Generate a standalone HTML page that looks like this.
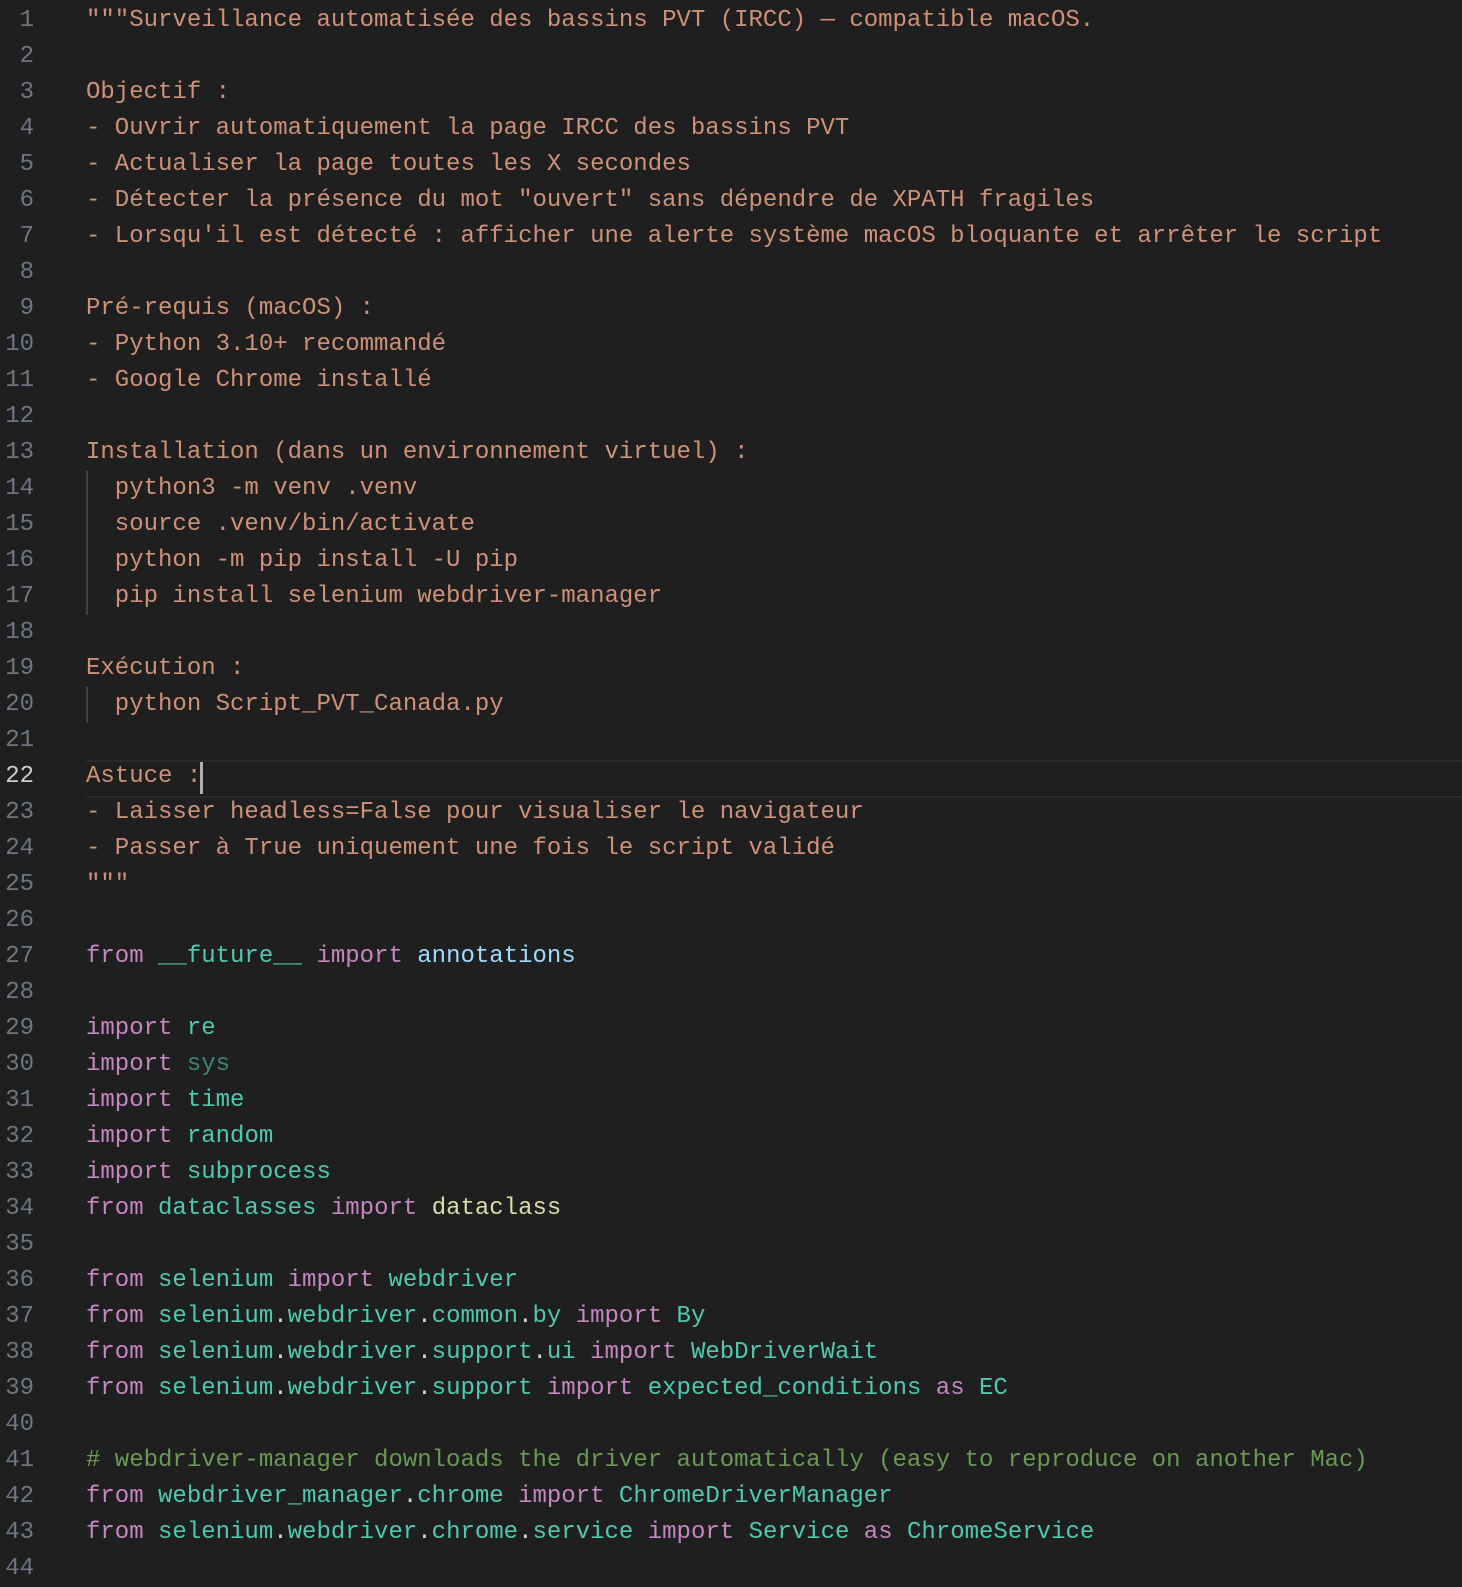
<!DOCTYPE html>
<html><head><meta charset="utf-8"><style>
body{margin:0;width:1462px;height:1568px;background:#1f1f1f;overflow:hidden;font-family:"Liberation Mono",monospace;font-size:24px}
.l{position:absolute;left:0;width:1462px;height:36px;line-height:36px;white-space:pre}
.n{position:absolute;right:1428px;color:#6e7681;text-align:right}
.c{position:absolute;left:86px;color:#ce9178}
.cur .n{color:#cccccc}
.k{color:#c586c0}.m{color:#4ec9b0}.v{color:#9cdcfe}.f{color:#dcdcaa}.g{color:#6a9955}.w{color:#d4d4d4}.d{color:#4ec9b0;opacity:.6}
.hl{position:absolute;left:86px;right:0;top:760px;height:34px;border-top:2px solid #2a2a2a;border-bottom:2px solid #2a2a2a}
.cursor{position:absolute;left:200px;top:762px;width:3px;height:32px;background:#aeafad}
.guide{position:absolute;left:86px;width:2px;background:#404040}
</style></head><body>
<div class="hl"></div>
<div class="guide" style="top:471px;height:144px"></div>
<div class="guide" style="top:687px;height:36px"></div>
<div class="l" style="top:3px"><span class="n">1</span><span class="c">"""Surveillance automatisée des bassins PVT (IRCC) — compatible macOS.</span></div>
<div class="l" style="top:39px"><span class="n">2</span></div>
<div class="l" style="top:75px"><span class="n">3</span><span class="c">Objectif :</span></div>
<div class="l" style="top:111px"><span class="n">4</span><span class="c">- Ouvrir automatiquement la page IRCC des bassins PVT</span></div>
<div class="l" style="top:147px"><span class="n">5</span><span class="c">- Actualiser la page toutes les X secondes</span></div>
<div class="l" style="top:183px"><span class="n">6</span><span class="c">- Détecter la présence du mot "ouvert" sans dépendre de XPATH fragiles</span></div>
<div class="l" style="top:219px"><span class="n">7</span><span class="c">- Lorsqu'il est détecté : afficher une alerte système macOS bloquante et arrêter le script</span></div>
<div class="l" style="top:255px"><span class="n">8</span></div>
<div class="l" style="top:291px"><span class="n">9</span><span class="c">Pré-requis (macOS) :</span></div>
<div class="l" style="top:327px"><span class="n">10</span><span class="c">- Python 3.10+ recommandé</span></div>
<div class="l" style="top:363px"><span class="n">11</span><span class="c">- Google Chrome installé</span></div>
<div class="l" style="top:399px"><span class="n">12</span></div>
<div class="l" style="top:435px"><span class="n">13</span><span class="c">Installation (dans un environnement virtuel) :</span></div>
<div class="l" style="top:471px"><span class="n">14</span><span class="c">  python3 -m venv .venv</span></div>
<div class="l" style="top:507px"><span class="n">15</span><span class="c">  source .venv/bin/activate</span></div>
<div class="l" style="top:543px"><span class="n">16</span><span class="c">  python -m pip install -U pip</span></div>
<div class="l" style="top:579px"><span class="n">17</span><span class="c">  pip install selenium webdriver-manager</span></div>
<div class="l" style="top:615px"><span class="n">18</span></div>
<div class="l" style="top:651px"><span class="n">19</span><span class="c">Exécution :</span></div>
<div class="l" style="top:687px"><span class="n">20</span><span class="c">  python Script_PVT_Canada.py</span></div>
<div class="l" style="top:723px"><span class="n">21</span></div>
<div class="l cur" style="top:759px"><span class="n">22</span><span class="c">Astuce :</span></div>
<div class="l" style="top:795px"><span class="n">23</span><span class="c">- Laisser headless=False pour visualiser le navigateur</span></div>
<div class="l" style="top:831px"><span class="n">24</span><span class="c">- Passer à True uniquement une fois le script validé</span></div>
<div class="l" style="top:867px"><span class="n">25</span><span class="c">"""</span></div>
<div class="l" style="top:903px"><span class="n">26</span></div>
<div class="l" style="top:939px"><span class="n">27</span><span class="c"><span class="k">from</span> <span class="m">__future__</span> <span class="k">import</span> <span class="v">annotations</span></span></div>
<div class="l" style="top:975px"><span class="n">28</span></div>
<div class="l" style="top:1011px"><span class="n">29</span><span class="c"><span class="k">import</span> <span class="m">re</span></span></div>
<div class="l" style="top:1047px"><span class="n">30</span><span class="c"><span class="k">import</span> <span class="d">sys</span></span></div>
<div class="l" style="top:1083px"><span class="n">31</span><span class="c"><span class="k">import</span> <span class="m">time</span></span></div>
<div class="l" style="top:1119px"><span class="n">32</span><span class="c"><span class="k">import</span> <span class="m">random</span></span></div>
<div class="l" style="top:1155px"><span class="n">33</span><span class="c"><span class="k">import</span> <span class="m">subprocess</span></span></div>
<div class="l" style="top:1191px"><span class="n">34</span><span class="c"><span class="k">from</span> <span class="m">dataclasses</span> <span class="k">import</span> <span class="f">dataclass</span></span></div>
<div class="l" style="top:1227px"><span class="n">35</span></div>
<div class="l" style="top:1263px"><span class="n">36</span><span class="c"><span class="k">from</span> <span class="m">selenium</span> <span class="k">import</span> <span class="m">webdriver</span></span></div>
<div class="l" style="top:1299px"><span class="n">37</span><span class="c"><span class="k">from</span> <span class="m">selenium</span><span class="w">.</span><span class="m">webdriver</span><span class="w">.</span><span class="m">common</span><span class="w">.</span><span class="m">by</span> <span class="k">import</span> <span class="m">By</span></span></div>
<div class="l" style="top:1335px"><span class="n">38</span><span class="c"><span class="k">from</span> <span class="m">selenium</span><span class="w">.</span><span class="m">webdriver</span><span class="w">.</span><span class="m">support</span><span class="w">.</span><span class="m">ui</span> <span class="k">import</span> <span class="m">WebDriverWait</span></span></div>
<div class="l" style="top:1371px"><span class="n">39</span><span class="c"><span class="k">from</span> <span class="m">selenium</span><span class="w">.</span><span class="m">webdriver</span><span class="w">.</span><span class="m">support</span> <span class="k">import</span> <span class="m">expected_conditions</span> <span class="k">as</span> <span class="m">EC</span></span></div>
<div class="l" style="top:1407px"><span class="n">40</span></div>
<div class="l" style="top:1443px"><span class="n">41</span><span class="c g"># webdriver-manager downloads the driver automatically (easy to reproduce on another Mac)</span></div>
<div class="l" style="top:1479px"><span class="n">42</span><span class="c"><span class="k">from</span> <span class="m">webdriver_manager</span><span class="w">.</span><span class="m">chrome</span> <span class="k">import</span> <span class="m">ChromeDriverManager</span></span></div>
<div class="l" style="top:1515px"><span class="n">43</span><span class="c"><span class="k">from</span> <span class="m">selenium</span><span class="w">.</span><span class="m">webdriver</span><span class="w">.</span><span class="m">chrome</span><span class="w">.</span><span class="m">service</span> <span class="k">import</span> <span class="m">Service</span> <span class="k">as</span> <span class="m">ChromeService</span></span></div>
<div class="l" style="top:1551px"><span class="n">44</span></div>
<div class="cursor"></div>
</body></html>
